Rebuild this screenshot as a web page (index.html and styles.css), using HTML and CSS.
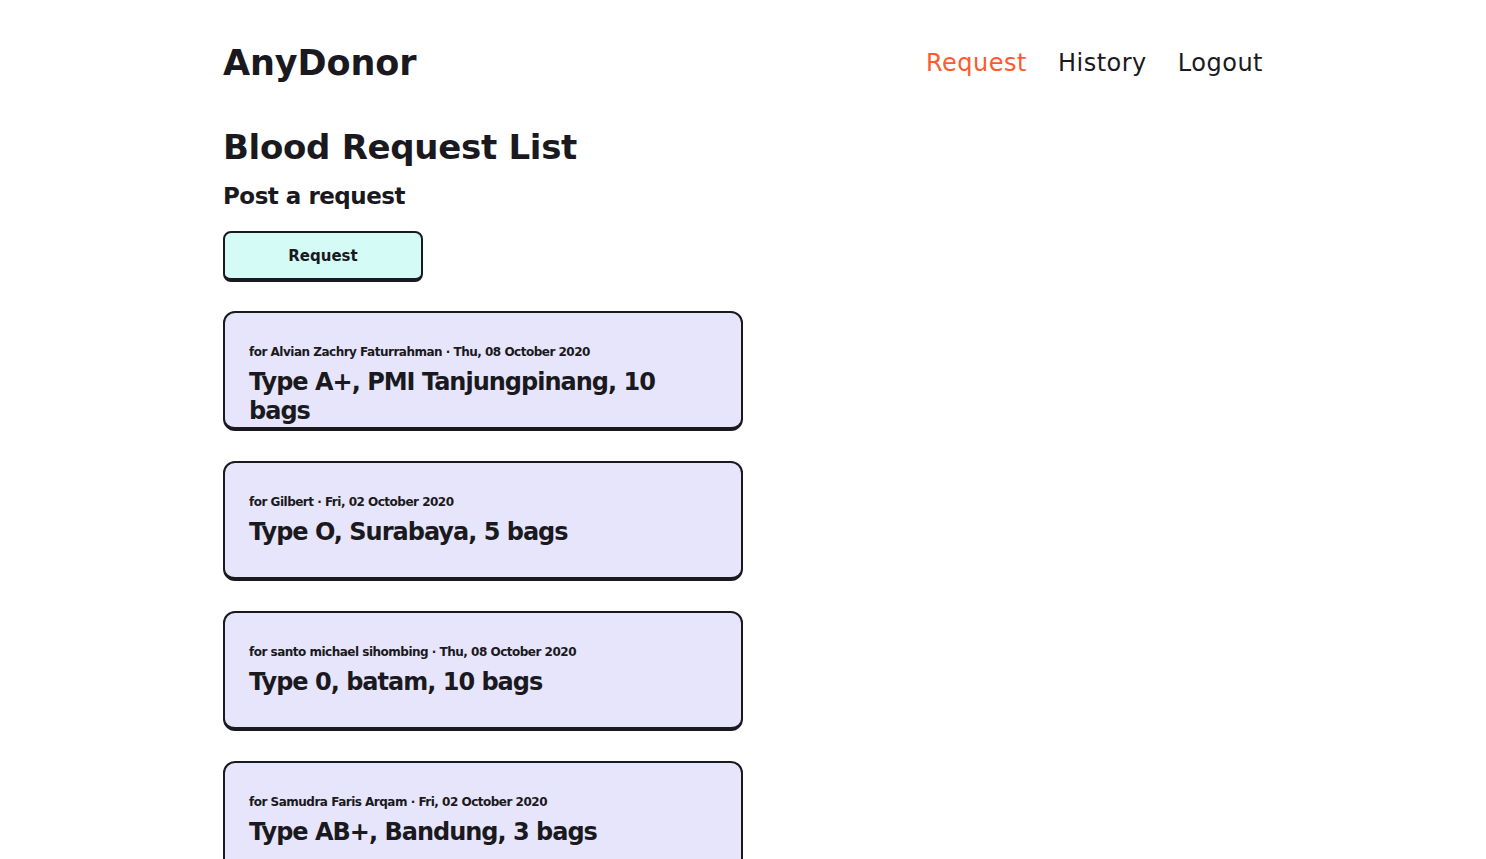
FILE: index.html
```html
<!DOCTYPE html>
<html lang="en">
<head>
<meta charset="utf-8">
<title>AnyDonor</title>
<link rel="stylesheet" href="styles.css">
</head>
<body>
<div class="container">
  <header class="header">
    <div class="logo">AnyDonor</div>
    <nav class="nav">
      <a class="nav-link active" href="#">Request</a>
      <a class="nav-link" href="#">History</a>
      <a class="nav-link" href="#">Logout</a>
    </nav>
  </header>
  <main>
    <h1 class="title">Blood Request List</h1>
    <h2 class="subtitle">Post a request</h2>
    <button class="btn">Request</button>
    <div class="list">
      <div class="card">
        <div class="meta">for Alvian Zachry Faturrahman · Thu, 08 October 2020</div>
        <div class="card-title">Type A+, PMI Tanjungpinang, 10 bags</div>
      </div>
      <div class="card">
        <div class="meta">for Gilbert · Fri, 02 October 2020</div>
        <div class="card-title">Type O, Surabaya, 5 bags</div>
      </div>
      <div class="card">
        <div class="meta">for santo michael sihombing · Thu, 08 October 2020</div>
        <div class="card-title">Type 0, batam, 10 bags</div>
      </div>
      <div class="card">
        <div class="meta">for Samudra Faris Arqam · Fri, 02 October 2020</div>
        <div class="card-title">Type AB+, Bandung, 3 bags</div>
      </div>
    </div>
  </main>
</div>
</body>
</html>
```

FILE: styles.css
```css
* { box-sizing: border-box; }
html, body { margin: 0; padding: 0; background: #ffffff; }
body {
  font-family: "DejaVu Sans", "Liberation Sans", sans-serif;
  color: #1a1920;
}
.container {
  width: 1040px;
  margin: 0 auto;
}
.header {
  display: flex;
  justify-content: space-between;
  align-items: center;
  padding-top: 41px;
  height: 85px;
}
.logo {
  font-size: 35px;
  font-weight: 700;
  line-height: 44px;
  letter-spacing: -0.1px;
}
.nav {
  display: flex;
  gap: 31px;
}
.nav-link {
  font-size: 24px;
  line-height: 44px;
  letter-spacing: 0.5px;
  color: #1a1920;
  text-decoration: none;
}
.nav-link.active { color: #fe5a2c; }
.title {
  margin: 40px 0 0;
  font-size: 34px;
  font-weight: 700;
  line-height: 44px;
  letter-spacing: -0.3px;
}
.subtitle {
  margin: 12px 0 0;
  font-size: 23px;
  font-weight: 700;
  line-height: 30px;
  letter-spacing: -0.5px;
}
.btn {
  display: block;
  margin-top: 20px;
  width: 200px;
  height: 51px;
  background: #d4fbf6;
  border: 2px solid #1a1920;
  border-bottom-width: 4px;
  border-radius: 8px;
  font-family: inherit;
  font-size: 15px;
  font-weight: 700;
  color: #1a1920;
  padding: 0;
}
.list {
  display: flex;
  flex-direction: column;
  gap: 30px;
  margin-top: 29px;
}
.card {
  width: 520px;
  height: 120px;
  background: #e7e5fb;
  border: 2px solid #1a1920;
  border-bottom-width: 4px;
  border-radius: 12px;
  padding: 32px 24px 0;
  overflow: hidden;
}
.meta {
  font-size: 12px;
  font-weight: 700;
  line-height: 15px;
  letter-spacing: -0.5px;
}
.card-title {
  margin-top: 8px;
  font-size: 24px;
  font-weight: 700;
  line-height: 29px;
  letter-spacing: -1px;
}
```
